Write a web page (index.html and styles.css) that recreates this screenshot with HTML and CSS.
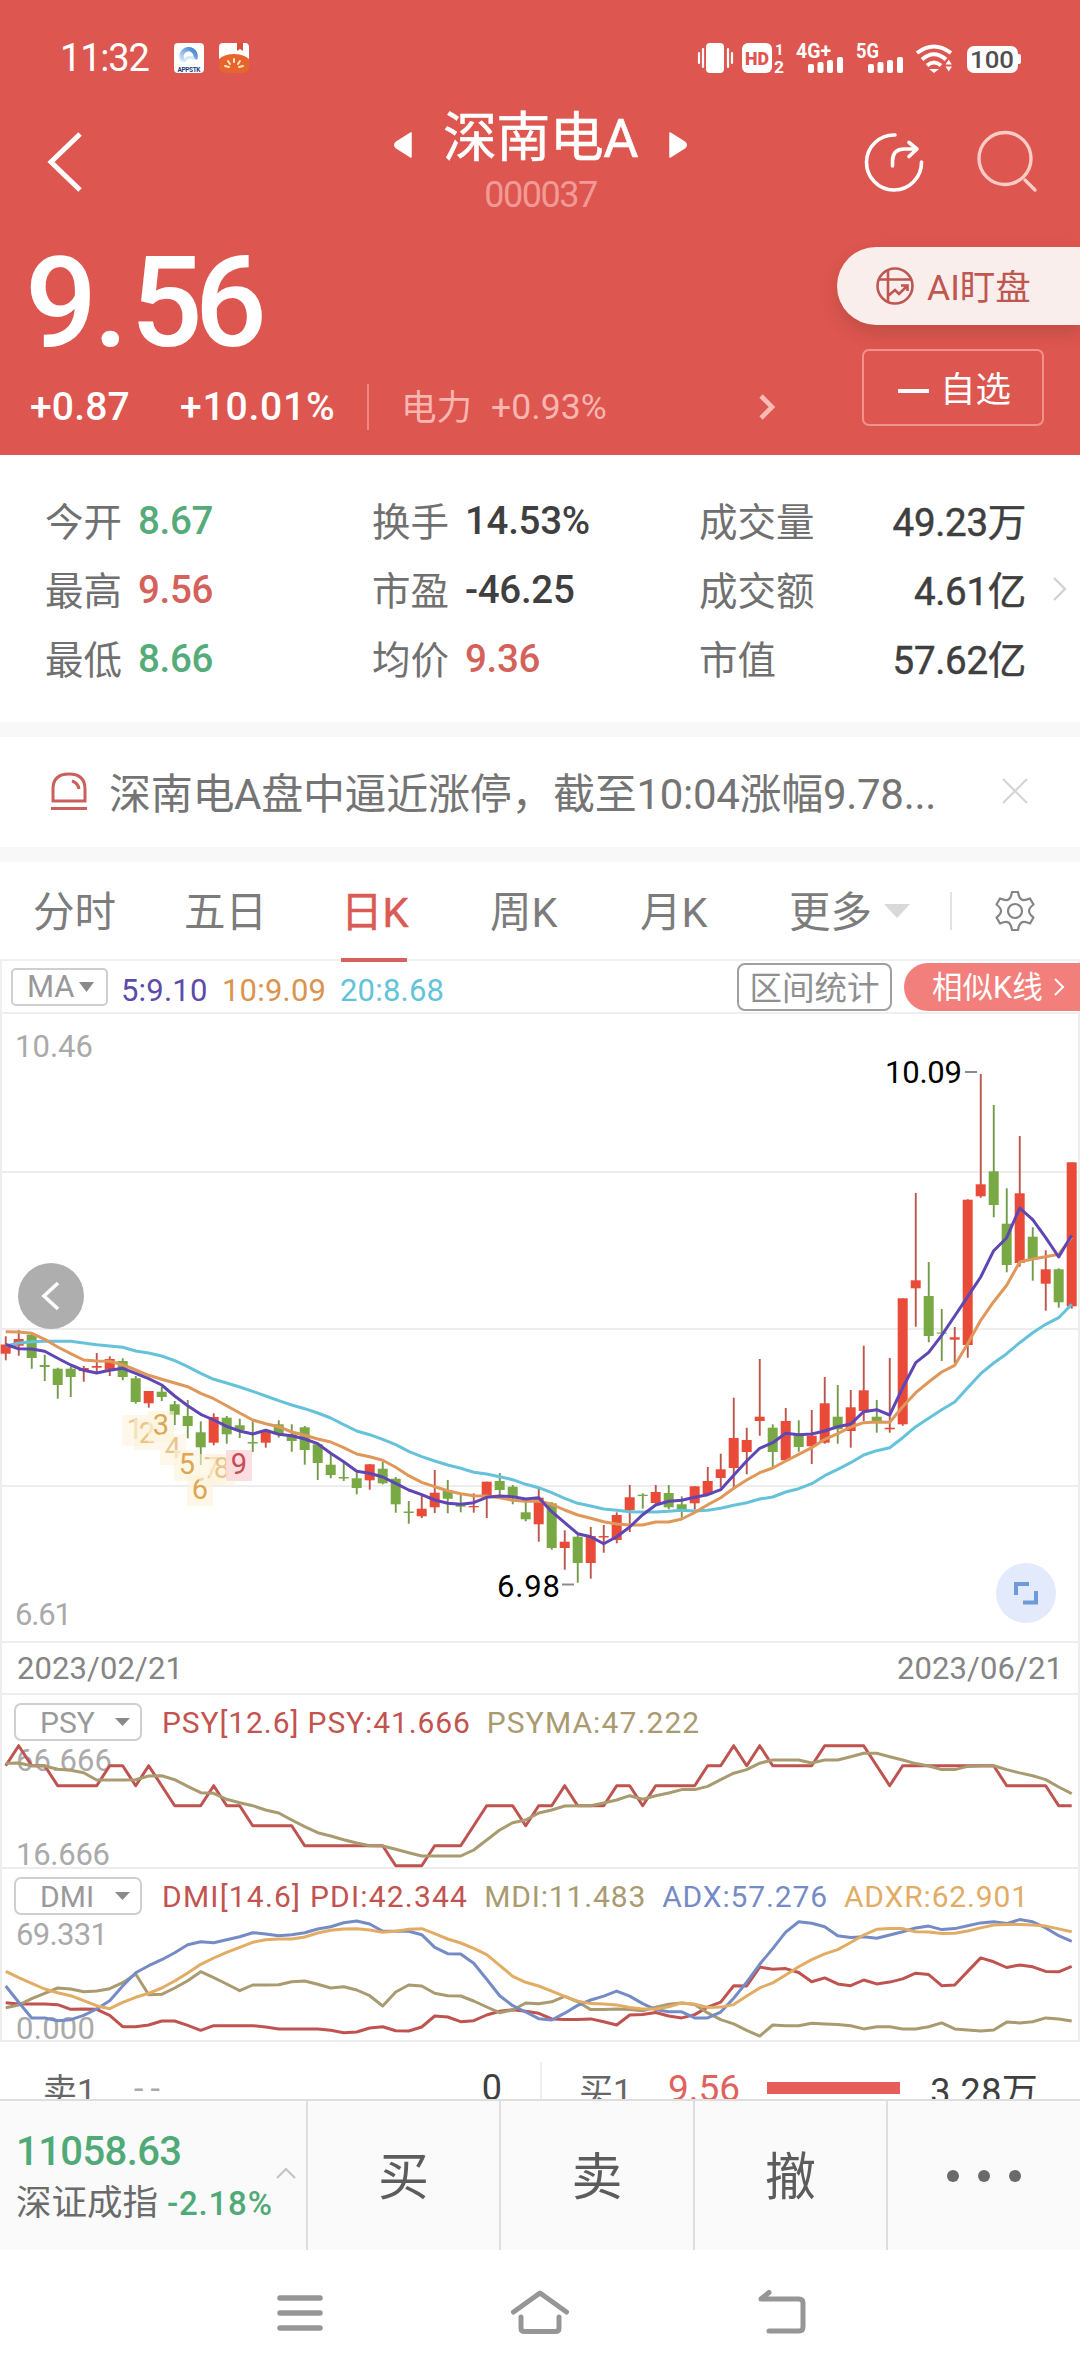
FILE: index.html
```html
<!DOCTYPE html>
<html lang="zh-CN">
<head>
<meta charset="utf-8">
<title>深南电A 000037</title>
<link rel="stylesheet" href="styles.css">
</head>
<body>
<header class="hero">
  <div class="status">
    <span class="clock">11:32</span>
    <svg class="app-a" width="30" height="30" viewBox="0 0 30 30"><defs><linearGradient id="ring" x1="0" y1="1" x2="1" y2="0"><stop offset="0" stop-color="#cfe4fa"/><stop offset="1" stop-color="#3f80cf"/></linearGradient></defs><rect width="30" height="30" rx="4" fill="#fff"/><path d="M9 17.500A7 7 0 1 1 21 16" fill="none" stroke="url(#ring)" stroke-width="4.500"/><path d="M10 19a6 6 0 0 1 10-3" fill="none" stroke="#d8e8fa" stroke-width="3"/><text x="15" y="28.500" font-size="6.500" font-weight="700" text-anchor="middle" fill="#23407d" textLength="23">APPSTK</text></svg>
    <svg class="app-b" width="30" height="30" viewBox="0 0 30 30"><rect width="30" height="26" rx="4" fill="#fff"/><path d="M18 0h6v8l-3-2-3 2z" fill="#d9513c"/><path d="M0 16Q6 11 15 11t15 5v8q0 6-8 6H8q-8 0-8-6z" fill="#e8642f"/><path d="M15 16v3M9 18l2 3M21 18l-2 3M6 23l4 1M24 23l-4 1" stroke="#ffe9b8" stroke-width="2" stroke-linecap="round"/></svg>
    <svg class="signals" width="330" height="34" viewBox="694 41 330 34" fill="#fff">
      <rect x="705" y="43" width="18" height="30" rx="4"/><path d="M702 49v18M698 53v10M727 49v18M731 53v10" stroke="#fff" stroke-width="2.200" stroke-linecap="round"/>
      <rect x="741" y="43" width="30" height="30" rx="6"/><text x="744" y="65" font-size="18" font-weight="900" fill="#dd564f" textLength="24" lengthAdjust="spacingAndGlyphs">HD</text>
      <text x="774" y="55" font-size="15" font-weight="700">1</text><text x="773" y="72.500" font-size="16" font-weight="700" textLength="10" lengthAdjust="spacingAndGlyphs">2</text>
      <text x="795" y="58" font-size="20" font-weight="700" textLength="35" lengthAdjust="spacingAndGlyphs">4G+</text>
      <rect x="807" y="64" width="6" height="9" rx="2"/><rect x="816.500" y="62" width="6" height="11" rx="2"/><rect x="826" y="60" width="6" height="13" rx="2"/><rect x="836" y="57" width="6" height="16" rx="2"/>
      <text x="855" y="58" font-size="20" font-weight="700" textLength="23" lengthAdjust="spacingAndGlyphs">5G</text>
      <rect x="867" y="64" width="6" height="9" rx="2"/><rect x="876.500" y="62" width="6" height="11" rx="2"/><rect x="886" y="60" width="6" height="13" rx="2"/><rect x="896" y="57" width="6" height="16" rx="2"/>
      <g fill="none" stroke="#fff" stroke-width="4"><path d="M916 53Q933 40 950 53"/><path d="M921 59.500Q933 49 945 59.500"/><path d="M926 65.500Q933 59.500 940 65.500"/></g><path d="M928 69h10l-5 4zM944.500 64.500l3.200-5 3.200 5zM944.500 66.500h6.500l-3.200 5z"/>
      <rect x="966" y="46" width="51" height="27" rx="7"/><rect x="1015" y="54" width="5" height="10" rx="2"/><text x="969" y="68" font-size="24" font-weight="500" fill="#4f4f4f" textLength="44" lengthAdjust="spacingAndGlyphs">100</text>
    </svg>
  </div>
  <div class="titlebar">
    <svg class="back" width="40" height="64" viewBox="0 0 40 64"><path d="M36 4L7 32l29 28" fill="none" stroke="#fff" stroke-width="5"/></svg>
    <div class="title">
      <div class="name-row">
        <svg width="18" height="28" viewBox="0 0 18 28"><path d="M17 2v24L2 16.500q-2.500-2.500 0-5z" fill="#fff" stroke="#fff" stroke-width="1.500" stroke-linejoin="round"/></svg>
        <h1>深南电A</h1>
        <svg width="18" height="28" viewBox="0 0 18 28"><path d="M1 2v24l15-9.500q2.500-2.500 0-5z" fill="#fff" stroke="#fff" stroke-width="1.500" stroke-linejoin="round"/></svg>
      </div>
      <div class="code">000037</div>
    </div>
    <svg class="tools" width="180" height="64" viewBox="862 130 180 64" fill="none" stroke-linecap="round" stroke-linejoin="round"><g stroke="#fff" stroke-width="3.600"><path d="M895 135a27.500 27.500 0 1 0 26.500 27"/><path d="M892.500 166v-5q0-12 12-12h11M909 142.500l8 6.500-8 7.500"/></g><g stroke="#fccbc6" stroke-width="3.400"><circle cx="1005" cy="158.500" r="26"/><path d="M1025 180l10 10"/></g></svg>
  </div>
  <div class="quote">
    <div class="price">9<span class="dot">.</span>56</div>
    <div class="ai-pill"><svg width="38" height="38" viewBox="0 0 38 38" fill="none" stroke="#bd5750" stroke-width="2.600"><circle cx="19" cy="19" r="17.500"/><path d="M12 3v31M3 12.500h32M12 29l7-6 4 4 8-8M25 18.500h6.500V24"/></svg><span>AI盯盘</span></div>
    <div class="changes">
      <span class="chg">+0.87</span><span class="pct">+10.01%</span><i></i><span class="sector">电力</span><span class="sector-pct">+0.93%</span>
      <svg width="20" height="30" viewBox="0 0 20 30"><path d="M4 4l11 11L4 26" fill="none" stroke="#fbbab4" stroke-width="4.600"/></svg>
    </div>
    <div class="watch"><b></b><span>自选</span></div>
  </div>
</header>

<section class="stats">
  <dl><dt>今开</dt><dd class="down">8.67</dd><dt>最高</dt><dd class="up">9.56</dd><dt>最低</dt><dd class="down">8.66</dd></dl>
  <dl><dt>换手</dt><dd>14.53%</dd><dt>市盈</dt><dd>-46.25</dd><dt>均价</dt><dd class="up">9.36</dd></dl>
  <dl class="wide"><dt>成交量</dt><dd>49.23万</dd><dt>成交额</dt><dd>4.61亿</dd><dt>市值</dt><dd>57.62亿</dd></dl>
  <svg width="16" height="28" viewBox="0 0 16 28"><path d="M2 3l11 11L2 25" fill="none" stroke="#d2d2d2" stroke-width="2.400"/></svg>
</section>

<section class="alert">
  <svg width="38" height="42" viewBox="0 0 38 42" fill="none" stroke="#c9605b" stroke-width="3"><path d="M3 30V18Q3 3 19 3t16 15v12zM22 10q6 2 7 8M1 37.500h36"/></svg>
  <p>深南电A盘中逼近涨停，截至10:04涨幅9.78...</p>
  <svg class="close" width="28" height="28" viewBox="0 0 28 28"><path d="M2 2l24 24M26 2L2 26" stroke="#d5d5d5" stroke-width="2.200"/></svg>
</section>

<nav class="tabs">
  <span>分时</span><span>五日</span><span class="active">日K</span><span>周K</span><span>月K</span><span>更多</span>
  <svg class="caret" width="26" height="14" viewBox="0 0 26 14"><path d="M0 0h26L13 14z" fill="#d9d9d9"/></svg>
  <i></i>
  <svg class="gear" width="44" height="44" viewBox="0 0 44 44" fill="none" stroke="#858585" stroke-width="2.200" stroke-linejoin="round"><path d="M19 3h6q1 6 3.500 7.500T37 9.500l3.500 6Q36 19 36 22t4.500 6.500l-3.500 6q-6-2.500-8.500-1T25 41h-6q-1-6-3.500-7.500T7 34.500l-3.500-6Q8 25 8 22t-4.500-6.500l3.500-6q6 2.500 8.500 1T19 3z"/><circle cx="22" cy="22" r="7"/></svg>
</nav>

<section class="ma-bar">
  <span class="chip">MA<svg width="15" height="10" viewBox="0 0 15 10"><path d="M0 0h15l-7.500 10z" fill="#8a8a8a"/></svg></span>
  <span class="ma5">5:9.10</span><span class="ma10">10:9.09</span><span class="ma20">20:8.68</span>
  <span class="range"><span>区间统计</span></span>
  <span class="similar"><span>相似K线</span><svg width="12" height="20" viewBox="0 0 12 20"><path d="M2 2l8 8-8 8" fill="none" stroke="#fff" stroke-width="2"/></svg></span>
</section>

<section class="kline">
  <svg class="plot" width="1080" height="628" viewBox="0 1013 1080 628">
    <path class="grid" d="M0 1171h1080M0 1328h1080M0 1485h1080M1 1013v628M1079 1013v628"/>
    <g class="axis"><text x="15" y="1056" textLength="78">10.46</text><text x="15" y="1624" textLength="57">6.61</text></g>
    <g id="candles"></g>
    <polyline id="ma20" class="line c-ma20"/><polyline id="ma10" class="line c-ma10"/><polyline id="ma5" class="line c-ma5"/>
    <g id="marks" class="marks"></g>
    <g class="extreme"><text x="885" y="1082" textLength="77">10.09</text><text x="497" y="1596" textLength="63">6.98</text><path d="M965 1071h12M562 1583.500h12"/></g>
  </svg>
  <div class="pan"><svg width="66" height="66" viewBox="0 0 66 66"><path d="M40 20L26 33l14 13" fill="none" stroke="#fff" stroke-width="3.600"/></svg></div>
  <div class="expand"><svg width="60" height="60" viewBox="0 0 60 60"><path d="M20 32V21h13M27 39.500h13V28" fill="none" stroke="#6d9ad8" stroke-width="4"/></svg></div>
</section>
<div class="dates"><span>2023/02/21</span><span>2023/06/21</span></div>

<section class="panel">
  <svg class="plot" width="1080" height="174" viewBox="0 0 1080 174"><path class="grid" d="M1 0v174M1079 0v174"/><g class="axis"><text x="16" y="76" textLength="96">66.666</text><text x="16" y="170" textLength="94">16.666</text></g><polyline id="psy" class="line c-red"/><polyline id="psyma" class="line c-olive"/></svg>
  <div class="legend psy"><span class="chip">PSY<svg width="15" height="8" viewBox="0 0 15 8"><path d="M0 0h15L7.500 8z" fill="#8a8a8a"/></svg></span><span class="t-red">PSY[12.6] PSY:41.666</span><span class="t-olive">PSYMA:47.222</span></div>
</section>
<section class="panel">
  <svg class="plot" width="1080" height="173" viewBox="0 0 1080 173"><path class="grid" d="M1 0v173M1079 0v173"/><g class="axis"><text x="16" y="76" textLength="92">69.331</text><text x="16" y="170" textLength="79">0.000</text></g><polyline id="pdi" class="line c-red"/><polyline id="mdi" class="line c-olive"/><polyline id="adx" class="line c-blue"/><polyline id="adxr" class="line c-amber"/></svg>
  <div class="legend"><span class="chip">DMI<svg width="15" height="8" viewBox="0 0 15 8"><path d="M0 0h15L7.500 8z" fill="#8a8a8a"/></svg></span><span class="t-red">DMI[14.6] PDI:42.344</span><span class="t-olive">MDI:11.483</span><span class="t-blue">ADX:57.276</span><span class="t-amber">ADXR:62.901</span></div>
</section>

<section class="depth">
  <div class="side ask"><span class="lbl">卖1</span><span class="dash">--</span><span class="vol">0</span></div>
  <div class="side bid"><span class="lbl">买1</span><span class="px">9.56</span><i></i><span class="vol">3.28万</span></div>
</section>

<footer class="actions">
  <div class="index"><div class="num">11058.63</div><div class="idx">深证成指<em>-2.18%</em></div><svg width="20" height="14" viewBox="0 0 20 14"><path d="M1 12l9-9 9 9" fill="none" stroke="#c4c4c4" stroke-width="2.200"/></svg></div>
  <div class="act">买</div><div class="act">卖</div><div class="act">撤</div>
  <div><svg width="80" height="14" viewBox="0 0 80 14" fill="#6a6a6a"><circle cx="9" cy="7" r="6"/><circle cx="40" cy="7" r="6"/><circle cx="71" cy="7" r="6"/></svg></div>
</footer>
<nav class="sysnav">
  <svg width="46" height="46" viewBox="0 0 46 46" fill="none" stroke="#969696" stroke-width="5.500" stroke-linecap="round"><path d="M3 8h40M3 23h40M3 38h40"/></svg>
  <svg width="60" height="46" viewBox="0 0 60 46" fill="none" stroke="#969696" stroke-width="5" stroke-linecap="round" stroke-linejoin="round"><path d="M3.500 22L30 3l26.500 19M11 27v11q0 3.500 3.500 3.500h31q3.500 0 3.500-3.500V27"/></svg>
  <svg width="50" height="46" viewBox="0 0 50 46" fill="none" stroke="#969696" stroke-width="5" stroke-linecap="round" stroke-linejoin="round"><path d="M12 41H42q4 0 4-4V13q0-4-4-4H4L12 2.500"/></svg>
</nav>
<script src="chart.js"></script>
</body>
</html>
```
FILE: styles.css
```css
* { box-sizing: border-box; }
body { margin: 0; width: 1080px; height: 2376px; overflow: hidden; background: #fff; color: #3f3f3f; font-family: Roboto, "Noto Sans CJK SC", sans-serif; display: flex; flex-direction: column; }
body > * { flex-shrink: 0; }
svg { display: block; flex-shrink: 0; overflow: visible; }
span, h1, p { white-space: nowrap; }
i { display: block; }

.hero { height: 455px; background: #dd564f; color: #fff; }
.status { height: 116px; padding: 0 55px 0 60px; display: flex; align-items: center; }
.clock { width: 114px; font-size: 38px; letter-spacing: -1.2px; }
.app-b { margin-left: 15px; }
.signals { margin-left: auto; }
.titlebar { height: 112px; padding: 0 38px 0 44px; display: grid; grid-template-columns: 218px 1fr 218px; }
.back { margin-top: 14px; }
.title { display: flex; flex-direction: column; align-items: center; margin-right: 5px; }
.name-row { display: flex; align-items: center; gap: 31px; height: 58px; }
h1 { margin: -12px 0 0; font-size: 54px; font-weight: 400; line-height: 58px; letter-spacing: -.5px; }
.name-row h1 { -webkit-text-stroke: .5px #fff; }
.code { font-size: 36px; line-height: 42px; letter-spacing: -1.5px; color: #f29a95; }
.tools { margin-top: 14px; justify-self: end; }
.quote { display: grid; grid-template-columns: 1fr 243px; grid-template-rows: 116px 111px; }
.price { padding-left: 25px; font-size: 127px; line-height: 150px; font-weight: 500; letter-spacing: -8px; }
.dot { letter-spacing: 2px; margin-left: 4px; }
.ai-pill { margin-top: 19px; height: 78px; padding-left: 39px; display: flex; align-items: center; gap: 13px; border-radius: 39px 0 0 39px; background: #faeeed; color: #bd5750; font-size: 35.500px; box-shadow: 0 8px 16px rgba(120, 60, 40, .28); }
.ai-pill span, .watch span { margin-top: -3px; }
.changes { display: flex; align-items: center; padding: 15px 0 0 30px; height: 106px; font-size: 39px; font-weight: 500; margin-top: 2px; }
.chg { width: 150px; } .pct { width: 187px; }
.chg { letter-spacing: .2px; } .pct { letter-spacing: .8px; }
.changes i { width: 2px; height: 46px; background: #ea8983; }
.changes .sector { margin: -4px 0 0 32px; width: 90px; }
.changes .sector, .sector-pct { color: #f9b5af; font-size: 35.500px; font-weight: 400; }
.sector-pct { width: 266px; letter-spacing: .1px; }
.watch { margin: 5px 0 0 25px; width: 182px; height: 77px; border: 2px solid #f0938d; border-radius: 7px; display: flex; align-items: center; font-size: 35.500px; padding-left: 34px; gap: 11px; }
.watch b { width: 31px; height: 4px; background: #fff; margin-top: 6px; }

.stats { height: 267px; padding: 31px 14px 0 45px; display: grid; grid-template-columns: 327px 327px 327px 1fr; }
.stats > svg { margin: 89px 0 0 26px; }
.stats dl { margin: 0; height: 207px; display: grid; grid-template: repeat(3, 69px) / 93px 1fr; align-items: center; font-size: 38.500px; }
.stats dl.wide { grid-template-columns: 130px 1fr; }
.stats dt { color: #707070; white-space: nowrap; margin-top: -4px; }
.stats dd { margin: 0; font-weight: 500; letter-spacing: -.3px; }
.wide dd { margin-top: -4px; text-align: right; font-weight: 400; -webkit-text-stroke: .5px #3f3f3f; }
.stats .up { color: #d4615a; } .stats .down { color: #55ab79; }

.alert { height: 140px; border: solid #f8f8f8; border-width: 15px 0; padding: 0 51px 0 50px; display: flex; align-items: center; }
.alert p { margin: -3px auto 0 21px; font-size: 42px; color: #747474; letter-spacing: -.3px; }
.close { margin-bottom: 2px; }

.tabs { height: 99px; display: grid; grid-template-columns: 151px 157px 149px 150px 149px 95px 66px 43px 1fr; padding-left: 33px; align-items: center; font-size: 41.500px; color: #7c7c7c; border-bottom: 2px solid #efefef; }
.tabs > span { margin-top: -3px; }
.tabs .active { color: #da5b55; position: relative; -webkit-text-stroke: .5px #da5b55; }
.tabs .active::after { content: ""; position: absolute; left: 0; bottom: -23px; width: 66px; height: 4px; background: #d5625d; }
.tabs i { width: 2px; height: 38px; background: #e3e3e3; }

.ma-bar { height: 53px; border: solid #efefef; border-width: 0 2px 2px; display: flex; align-items: center; padding-left: 9px; font-size: 31px; }
.chip { display: flex; align-items: center; border: 2px solid #cfcfcf; border-radius: 5px; color: #999; height: 38px; }
.ma-bar .chip { width: 97px; padding-left: 14px; gap: 4px; margin-right: 13px; font-size: 31px; }
.ma5 { color: #5b4bab; width: 101px; } .ma10 { color: #db9350; width: 118px; } .ma20 { color: #63c3da; }
.ma5, .ma10, .ma20 { padding-top: 7px; letter-spacing: .2px; }
.range { margin-left: auto; width: 155px; height: 48px; border: 2px solid #a0a0a0; border-radius: 8px; color: #8f8f8f; font-size: 32.500px; display: grid; place-items: center; }
.range span, .similar span { margin-top: -3px; }
.similar { margin: 0 -2px 0 12px; width: 176px; height: 48px; border-radius: 24px 0 0 24px; background: #f27f7b; color: #fff; font-size: 30.500px; display: flex; align-items: center; padding-left: 28px; gap: 10px; }

.kline, .panel { position: relative; }
.kline { height: 627px; }
.plot { position: absolute; left: 0; top: 0; overflow: hidden; }
.grid { stroke: #ededed; stroke-width: 2; fill: none; }
.axis { fill: #aaa; font-size: 31px; }
.line { fill: none; stroke-width: 3; stroke-linejoin: round; }
.c-ma20 { stroke: #66c2db; } .c-ma10 { stroke: #df975a; } .c-ma5 { stroke: #5f46b4; }
.c-red { stroke: #bf5350; } .c-olive { stroke: #aa9a70; } .c-blue { stroke: #758bc6; } .c-amber { stroke: #e2ac65; }
.up-body { fill: #ea4a38; } .up-wick { fill: #bb574d; } .down-body { fill: #78a944; } .down-wick { fill: #749a4c; }
.extreme { font-size: 31px; fill: #000; } .extreme path { stroke: #8b8b8b; stroke-width: 2; }
.marks rect { fill: #fcf3dc; opacity: .65; } .marks text { font-size: 29px; fill: #dfa553; text-anchor: middle; }
.marks rect.hot { fill: #fadadd; opacity: .9; } .marks text.hot { fill: #c64b54; } .marks .faint { opacity: .6; }
.pan { position: absolute; left: 18px; top: 249px; width: 66px; height: 66px; border-radius: 50%; background: #aeaeae; }
.expand { position: absolute; right: 24px; top: 549px; width: 60px; height: 60px; border-radius: 50%; background: #e3eafb; }
.dates { height: 54px; padding: 0 15px; display: flex; justify-content: space-between; align-items: center; font-size: 31px; letter-spacing: .1px; color: #858585; border: 2px solid #ededed; }
.panel { height: 174px; border-bottom: 2px solid #ededed; }
.panel + .panel { height: 173px; }
.legend { position: relative; display: flex; align-items: center; padding: 8px 0 0 14px; font-size: 30px; gap: 16px; letter-spacing: .85px; }
.legend .chip { width: 128px; padding: 0 10px 0 24px; border-radius: 7px; margin-right: 4px; justify-content: space-between; letter-spacing: 0; }
.legend .t-red { letter-spacing: 1.200px; } .psy .t-red { letter-spacing: .9px; } .psy .t-olive { letter-spacing: 1.100px; }
.t-red { color: #c2534f; } .t-olive { color: #aa9a70; } .t-blue { color: #758bc6; } .t-amber { color: #e2ac65; }

.depth { height: 57px; overflow: hidden; display: flex; font-size: 34px; padding-top: 20px; }
.side { width: 540px; height: 52px; display: flex; align-items: center; flex-shrink: 0; }
.ask { padding: 0 38px 0 43px; } .bid { border-left: 2px solid #eee; padding: 0 42px 0 37px; }
.lbl { color: #666; width: 89px; } .dash { color: #aaa; letter-spacing: 7px; margin-left: 2px; }
.vol { margin-left: auto; font-size: 36px; } .px { color: #e0625d; font-size: 37px; }
.bid .vol { letter-spacing: .3px; }
.bid i { width: 133px; height: 12px; background: #e65d5b; margin-left: 27px; }

.actions { height: 151px; background: #fafafa; border-top: 2px solid #dedede; display: grid; grid-template-columns: 306px 193px 194px 193px 1fr; font-size: 51px; color: #5c5c5c; }
.actions > div { display: grid; place-items: center; border-left: 2px solid #dedede; }
.actions > .act { padding-bottom: 6px; }
.actions > .index { border: 0; display: grid; grid-template: 52px 44px / 274px 1fr; padding: 24px 0 0 16px; justify-items: start; align-items: center; align-content: start; }
.num { font-size: 40px; font-weight: 500; color: #50aa77; letter-spacing: -.6px; }
.idx { grid-row: 2; font-size: 35.500px; color: #6b6b6b; white-space: nowrap; }
.idx em { font-style: normal; font-weight: 500; font-size: 33px; color: #50aa77; margin-left: 9px; letter-spacing: .8px; }
.index svg { grid-area: 1 / 2 / span 2; margin-left: -14px; }
.sysnav { height: 125px; padding-left: 3px; display: flex; justify-content: center; align-items: center; gap: 187px; }
```
FILE: chart.js
```js
// One slot per trading day.
const dayX = k => 5.7 + 13 * k;
const NS = 'http://www.w3.org/2000/svg';

function add(parent, tag, attrs, text) {
  const el = document.createElementNS(NS, tag);
  for (const name in attrs) el.setAttribute(name, attrs[name]);
  if (text) el.textContent = text;
  parent.appendChild(el);
}
function line(id, ys) {
  document.getElementById(id).setAttribute('points', ys.map((y, k) => dayX(k) + ',' + y).join(' '));
}

// [up 1 / down 0, wick top, wick bottom, body top, body bottom]
const candles = [
[1,1335.3,1359.3,1343.5,1352.7],[1,1329,1354.7,1338,1344.7],[0,1331.7,1367.7,1333.7,1357],[0,1353.7,1380,1364,1366],[0,1366.7,1397.7,1367.7,1384],[0,1366,1396,1367.7,1376],[1,1365,1380.7,1367,1370],[1,1352,1371.7,1365,1366.7],[1,1355.3,1375,1358,1368.7],[0,1357.3,1379.3,1360,1376],
[0,1375,1402.7,1377.3,1401],[1,1390,1406.7,1390,1402.3],[0,1386,1400,1390.7,1396],[0,1400,1424,1403.3,1413.7],[0,1399,1437.3,1415,1425],[0,1420.3,1464,1431.3,1446.3],[1,1412.3,1444.3,1416,1441.7],[0,1415,1442.7,1416.7,1433.3],[0,1417.7,1437,1424.3,1429],[0,1420,1451,1441,1442.5],
[1,1429,1446.7,1431,1441.7],[0,1419.3,1436.7,1423.3,1433.3],[0,1423.3,1450.7,1433.3,1440],[0,1425,1463.7,1426.3,1449],[0,1441.7,1479,1443.3,1462],[0,1452.7,1477.3,1463.7,1474],[0,1460,1480,1476,1477.5],[0,1471.7,1493.3,1477.3,1487],[1,1463,1488.7,1463.3,1479.3],[0,1461,1483.3,1467.7,1482.3],
[0,1476,1511.7,1477.7,1503.3],[0,1500,1522.7,1510.5,1512],[1,1494.3,1517,1507.7,1515.3],[1,1469,1512,1491.7,1506.3],[0,1479,1512.3,1490,1497.7],[0,1492.3,1511.3,1503.3,1505.7],[1,1492.3,1511.7,1505,1506.3],[1,1480.7,1517,1480.7,1496.7],[0,1472,1494,1480,1489],[0,1484,1503.3,1485.7,1497],
[0,1501,1520.3,1511.3,1518.3],[1,1487.7,1540.7,1496.7,1523.3],[0,1501,1548.7,1502.3,1547],[1,1529.3,1568.7,1540.7,1547],[0,1534,1581.7,1535.7,1562],[1,1526,1577.7,1535,1562],[1,1524,1551.7,1535,1536.5],[1,1511.3,1542.3,1514,1539],[1,1484,1531,1496.3,1509.3],[0,1492.3,1507.7,1493.7,1495],
[1,1484,1505,1491,1502],[0,1484,1508.3,1492,1506.3],[0,1495.3,1516.7,1503.3,1508.3],[1,1485,1508.7,1485.3,1502.3],[1,1466,1494.3,1480,1493.3],[1,1452.7,1486.7,1468.3,1477],[1,1396.7,1486,1437,1467],[1,1426.7,1473.3,1439,1451],[1,1358,1434.7,1415.7,1420],[0,1423.3,1466,1426.7,1451],
[1,1407,1460,1420,1459.3],[0,1419.3,1450.7,1434,1446],[1,1409,1463,1434.7,1445.3],[1,1376,1442.7,1402.3,1441.7],[0,1384,1442.7,1415.7,1428.3],[1,1389,1446.7,1406.3,1430],[1,1344.7,1420,1389.3,1410],[0,1399,1431.7,1415.7,1420.7],[1,1357,1431.7,1426.7,1428.3],[1,1297.3,1424.7,1297.3,1423.3],
[1,1192,1325.7,1279.3,1287.3],[0,1261,1341.3,1295,1335],[0,1308,1360,1331.5,1332.7],[1,1326,1361.7,1336.3,1338.7],[1,1198.3,1356.7,1198.7,1344],[1,1073,1196.7,1183.3,1195.3],[0,1104,1216.3,1170.3,1204],[0,1187.3,1271.3,1222.7,1264],[1,1135,1265.7,1192.3,1262],[0,1226.3,1279.7,1235.7,1258.3],
[1,1249.3,1309.7,1268.3,1282.7],[0,1267.3,1306.7,1268.3,1301.3],[1,1161.3,1307.7,1161.3,1305.3]];
const candleLayer = document.getElementById('candles');
candles.forEach(([up, wt, wb, bt, bb], k) => {
  const side = up ? 'up' : 'down', x = dayX(k);
  add(candleLayer, 'rect', { class: side + '-wick', x: x - 0.9, y: wt, width: 1.9, height: wb - wt });
  add(candleLayer, 'rect', { class: side + '-body', x: x - 5, y: bt, width: 10, height: bb - bt });
});

line('ma5', [1343.5,1347.7,1348,1350.3,1357.3,1364,1369.3,1372,1369.3,1367.3,1372.3,1377.7,1384,1395,1404.7,1413.3,1419,1425.3,1430,1433,1429.3,1433.3,1434.7,1438,1442.7,1452.3,1460.7,1470.3,1472.3,1476,1482.3,1489,1493.7,1499,1502.3,1503.3,1501.7,1496.3,1495,1495.7,1498,1496.7,1510.7,1521.7,1532.7,1535.7,1542.7,1535.7,1526,1513.7,1504,1500.3,1499.3,1496.3,1493.7,1488.7,1474.3,1460,1447.3,1441.7,1432.3,1433.7,1433,1430,1425.7,1423,1410.7,1408.7,1414,1386.7,1361.7,1351.3,1334.3,1315,1295.7,1276,1249.7,1236.7,1207,1218.7,1236.7,1256,1234.3]);
line('ma10', [1330.7,1331,1332.3,1338.3,1346,1352.7,1359,1360,1360.3,1363.7,1369,1374.3,1378.3,1382,1385.7,1392.3,1397.7,1404.7,1412,1419,1422.7,1425.7,1431,1434.3,1438,1441,1446.7,1453,1455.7,1459.3,1466.3,1474.7,1481.3,1485.7,1489.7,1492.7,1494.7,1495,1496.7,1499.3,1500.3,1500,1503.3,1509,1514,1517.3,1520.7,1523,1524,1524,1521,1521,1518,1511.5,1503.7,1496.7,1487.3,1479,1471.7,1467,1460,1453.3,1446.7,1438.3,1432.7,1426,1421.7,1421,1421.3,1405.7,1391.7,1381,1371,1364.3,1342.7,1319.3,1300.7,1284.3,1261,1258,1255.7,1253.3,1236]);
line('ma20', [1345,1342,1340.7,1340.3,1340.3,1340.3,1342,1343.7,1345,1346.3,1350,1352,1355,1359.7,1365.7,1372.3,1378.3,1382,1386,1390.3,1395,1399.7,1404,1407.7,1412,1417,1423.7,1430,1433.7,1438.3,1443.7,1450.3,1455.7,1460,1464,1467.3,1471.3,1473,1475.7,1478.7,1483.3,1486.7,1491.7,1497.3,1502.3,1505,1508,1509.3,1510.7,1511,1511,1510.3,1509.3,1510,1509.3,1507.3,1504.3,1501.7,1498,1496,1491,1487.7,1482.7,1474.7,1468.3,1461.7,1454,1449.7,1446.7,1436.7,1425.7,1417.3,1408.7,1401,1386.7,1372.7,1362,1352.7,1341.7,1331.7,1323.3,1316.7,1303.3]);

// Nine-count sequence badges.
const markLayer = document.getElementById('marks');
[[135,1428,'faint'],[147,1432,'faint'],[161,1424,''],[173,1447,'faint'],[187,1463,''],[200,1488,''],[212,1467,'faint'],[222,1467,'faint'],[239,1463,'hot']].forEach(([x, y, cls], n) => {
  add(markLayer, 'rect', { class: cls, x: x - 13, y: y - 14, width: 26, height: 31 });
  add(markLayer, 'text', { class: cls, x, y: y + 10 }, String(n + 1));
});

// PSY moves in twelfths, so it is stored as steps below the maximum.
line('psy', [1,0,1,1,2,2,2,2,1,1,2,1,2,3,3,3,2,3,3,4,4,4,4,5,5,5,5,5,5,5,6,6,6,5,5,5,4,3,3,3,4,3,3,2,3,3,3,2,2,3,2,2,2,2,1,1,0,1,0,1,1,1,1,0,0,0,0,1,2,1,1,1,1,1,1,1,1,2,2,2,2,3,3].map(s => 50.7 + 20 * s));
line('psyma', [68.3,68,70.7,71,74.3,75.3,77.7,85,85,85,84.7,81,80.7,84.7,91.3,97.7,98.3,104.3,107.7,110.7,115,118,125,131.7,137.7,141,144.7,148,150.7,151,154.3,157.7,161,161,161,161,155,145,135,127.7,125,118,115,111,110.7,110.7,108,105,100.7,104.3,100.7,98,94.6,94.6,91.4,84.6,78.2,74.6,68.2,65,65,65,68,65,65,61.8,58.2,58.2,61.8,65,68.6,71,74.6,74.6,71.4,71,70.7,74.6,77.9,80.7,84.6,92,98.6]);

line('pdi', [133.7,135,135,135,135.7,140.3,140,140.3,146.3,157.7,157.7,156,152,152,156.3,161.3,156.7,156.7,156.7,156.7,158,160,160,160,160,161.3,163.7,163,159,157.7,161.7,162,158,147,148,152.7,151.7,146,142.3,140.7,142.3,144.3,149.9,150.6,150.6,149.9,152.8,156,146,145.6,143.5,147,148.9,145.6,138.1,133.1,116.7,117,98.1,100.3,99.6,103.5,112.8,108.9,114.9,116.7,111,114.9,113.1,109.9,104.2,105.6,116.7,116,102.4,88.9,92.8,98.5,96,97.8,102.4,102.8,97.4]);
line('mdi', [138.7,136,129.7,124.3,119,120,122.7,122,119.7,113.7,105,125.7,125.3,119,111.7,102.7,108.7,115,121.7,116,116,115.7,112.7,112,115.3,119,117.7,121,126.7,137,123,116,117,124.3,126.7,127,132,138,143.7,141,134,134.7,132.8,127.4,132.8,140.6,140.6,139.9,140.6,141.7,138.1,135.3,133.9,135.6,143.9,150.6,154.9,161.4,167.1,156,156.7,156.7,154.2,154.9,155.6,156.7,159.9,157.8,157.8,159.9,159.9,157.8,153.9,159.9,161,162.1,161,153.1,153.9,152.8,148.9,149.9,152.1]);
line('adx', [117,133.3,149,149,151.7,150.7,146.3,140,131.7,117,103.7,96.7,90.7,83.7,75.7,72.7,73.7,70.7,67.7,63.7,65,66.7,65.7,63.7,60,57.7,53.7,52,55,62.3,62.3,62.3,65.7,78.3,84.7,85,94.3,110.3,126.7,136.7,143,149.7,151,144.2,136.4,131,127.1,122.1,127.1,134.6,140.6,142.8,142.8,148.9,148.9,143.1,129.2,113.1,95.3,79.6,63.1,52.8,54.2,57.8,66.7,68.5,67.8,69.2,66,62.8,58.9,57.1,60.6,59.6,56.7,53.9,52.8,54.6,50.6,52.8,58.9,66.7,72.4]);
line('adxr', [102.3,108.7,114.3,120,123.7,126.7,131.7,136.7,139.7,133.3,128.3,124.3,119,112,104,95.3,89,83.3,78.3,73.3,70.7,70,70,68,64,61.3,60,59.7,61,63.3,62.3,60.3,59.7,64.7,70,74,79.3,85.7,96.3,107.3,113.3,117,122.1,127.4,132.1,134.6,135,136,138.5,139.9,139.9,137.8,133.9,135.3,138.5,138.1,135.6,127.1,118.9,113.9,106,97.8,90.6,84.9,80.6,73.5,66,60.3,59.6,59.6,62.8,63.1,64.6,64.2,62,58.9,56,55.6,55.6,56,57.1,59.9,62.8]);
```
